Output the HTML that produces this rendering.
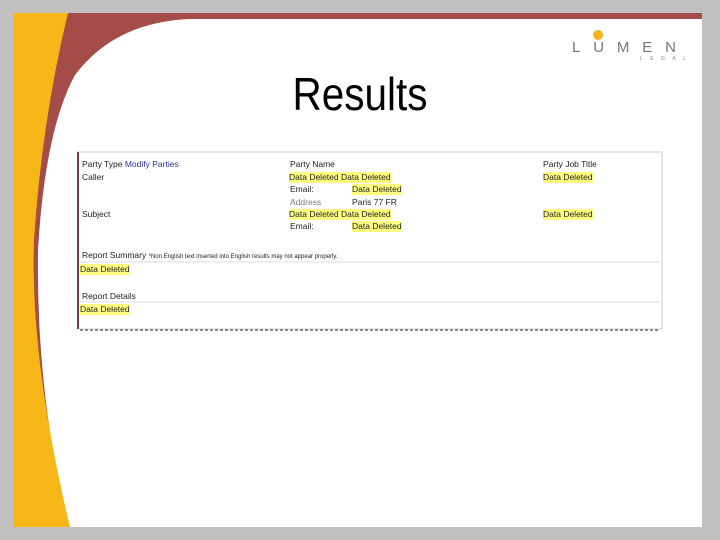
<!DOCTYPE html>
<html><head><meta charset="utf-8"><style>
body{margin:0;width:720px;height:540px;background:#c0c0c0;position:relative;overflow:hidden;font-family:"Liberation Sans",sans-serif}
.t{position:absolute;font-size:8.5px;color:#222;white-space:nowrap;line-height:11px}
.y{background:#ffff80}
</style></head><body>
<svg width="720" height="540" style="position:absolute;left:0;top:0">
<rect x="14" y="13" width="688" height="514" fill="#fff"/>
<path d="M14 13 L702 13 L702 19 L190 19 Q115 22 75 75 Q45 130 38 250 Q36 400 70 527 L14 527 Z" fill="#a44c48"/>
<path d="M14 13 L68 13 Q42 120 34 240 Q30 360 70 527 L14 527 Z" fill="#f8b718"/>
<circle cx="598" cy="35" r="5" fill="#f5b21a"/>
<text x="572" y="52" font-family="Liberation Sans" font-size="15" fill="#777" letter-spacing="10" textLength="114">LUMEN</text>
<text x="640" y="60" font-family="Liberation Sans" font-size="5" fill="#888" textLength="46">LEGAL</text>
<text x="0" y="0" transform="translate(360 110) scale(0.88 1)" text-anchor="middle" font-family="Liberation Sans" font-size="46" fill="#000">Results</text>
<rect x="78" y="152" width="584" height="177" fill="#fff" stroke="#ccc" stroke-width="1"/>
<rect x="77" y="152" width="2" height="177" fill="#7a4040"/>
<line x1="79" y1="262" x2="660" y2="262" stroke="#ddd"/>
<line x1="79" y1="302" x2="660" y2="302" stroke="#ddd"/>
<line x1="80" y1="330" x2="660" y2="330" stroke="#888" stroke-width="2" stroke-dasharray="3,2"/>
</svg>
<div class="t" style="left:82px;top:159px">Party Type <span style="color:#3030a0">Modify Parties</span></div>
<div class="t" style="left:290px;top:159px">Party Name</div>
<div class="t" style="left:543px;top:159px">Party Job Title</div>
<div class="t" style="left:82px;top:172px">Caller</div>
<div class="t y" style="left:289px;top:172px">Data Deleted Data Deleted</div>
<div class="t y" style="left:543px;top:172px">Data Deleted</div>
<div class="t" style="left:290px;top:184px">Email:</div>
<div class="t y" style="left:352px;top:184px">Data Deleted</div>
<div class="t" style="left:290px;top:197px;color:#777">Address</div>
<div class="t" style="left:352px;top:197px">Paris 77 FR</div>
<div class="t" style="left:82px;top:209px">Subject</div>
<div class="t y" style="left:289px;top:209px">Data Deleted Data Deleted</div>
<div class="t y" style="left:543px;top:209px">Data Deleted</div>
<div class="t" style="left:290px;top:221px">Email:</div>
<div class="t y" style="left:352px;top:221px">Data Deleted</div>
<div class="t" style="left:82px;top:250px">Report Summary <span style="font-size:6px">*Non English text inserted into English results may not appear properly.</span></div>
<div class="t y" style="left:80px;top:264px">Data Deleted</div>
<div class="t" style="left:82px;top:291px">Report Details</div>
<div class="t y" style="left:80px;top:304px">Data Deleted</div>
</body></html>
